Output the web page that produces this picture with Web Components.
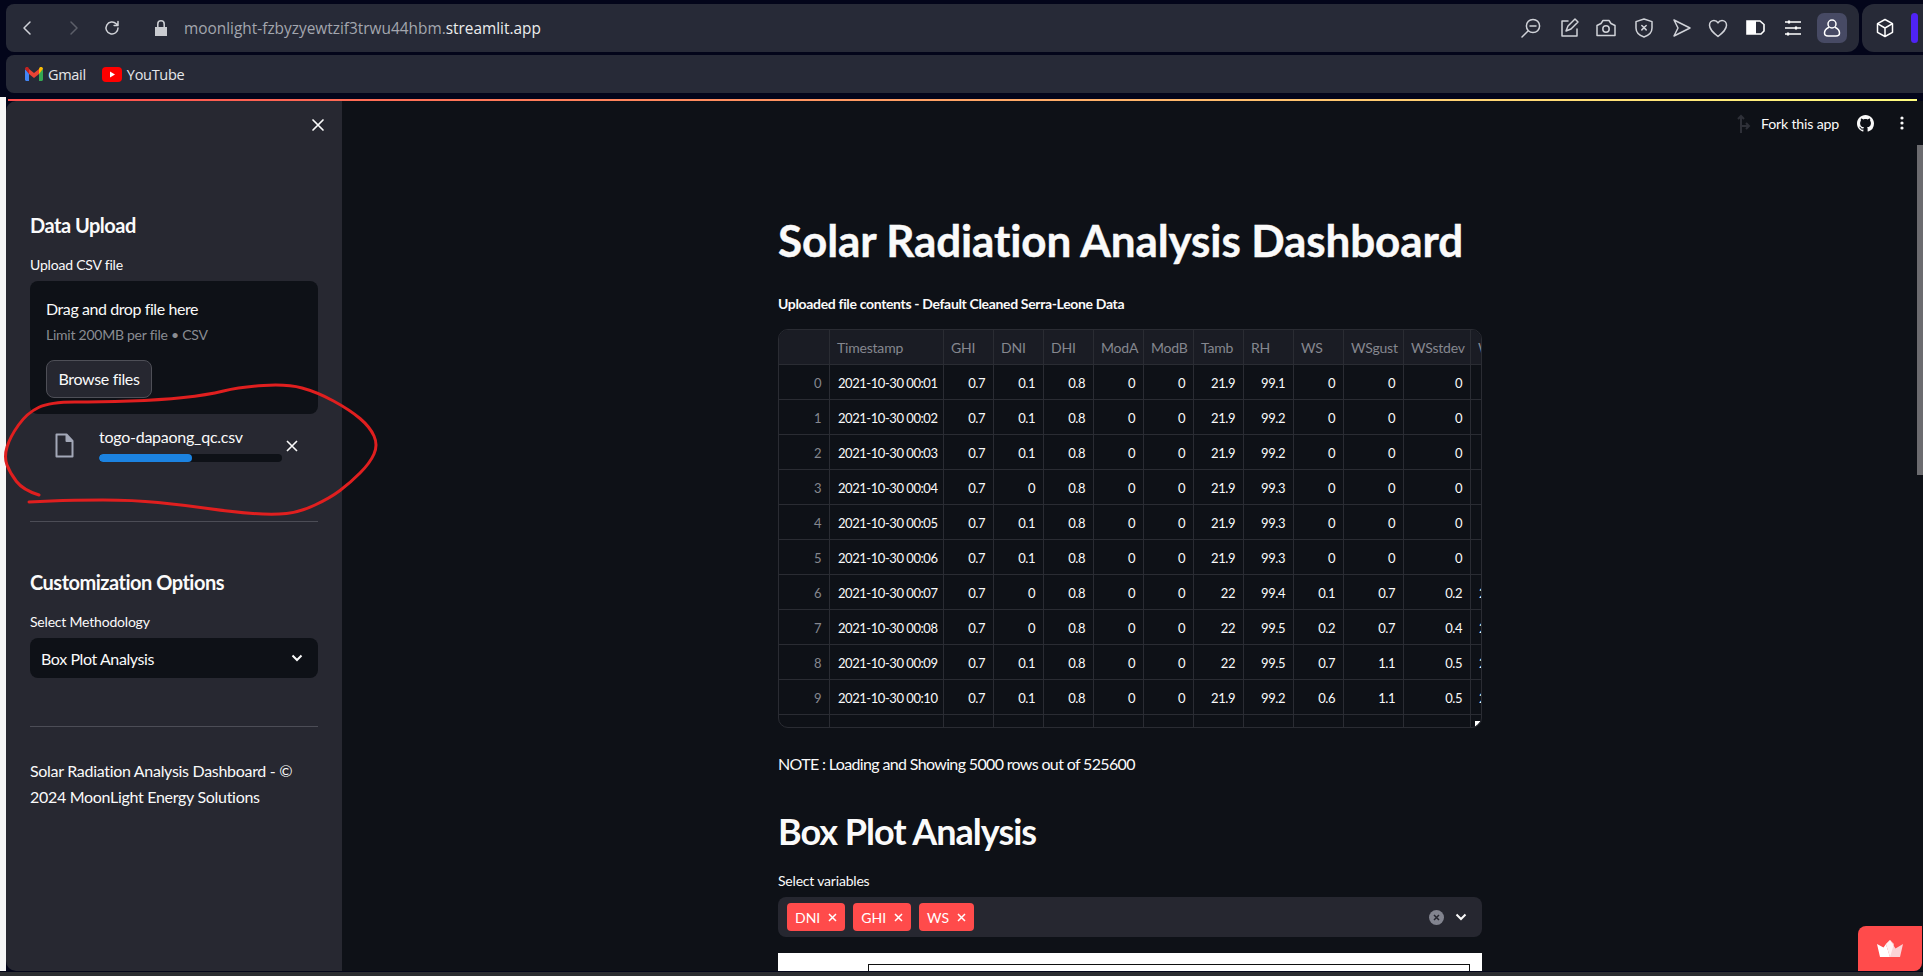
<!DOCTYPE html>
<html>
<head>
<meta charset="utf-8">
<title>Solar Radiation Analysis Dashboard</title>
<style>
  html, body { margin: 0; height: 976px; overflow: hidden; background: #03051a; }
  body { font-family: "Lato", "Noto Sans", sans-serif; color: #fafafa; }
</style>
</head>
<body>
<browser-frame>
  <browser-toolbar></browser-toolbar>
  <bookmark-bar></bookmark-bar>
  <app-shell>
    <app-sidebar slot="side">
      <section-title>Data Upload</section-title>
      <file-uploader></file-uploader>
      <side-rule style="margin-top:59px"></side-rule>
      <section-title style="margin-top:46px">Customization Options</section-title>
      <select-box></select-box>
      <side-rule style="margin-top:48px"></side-rule>
      <side-note>Solar Radiation Analysis Dashboard - ©<br>2024 MoonLight Energy Solutions</side-note>
    </app-sidebar>
    <app-main slot="main">
      <data-table></data-table>
      <multi-select>
        <tag-chip>DNI</tag-chip>
        <tag-chip>GHI</tag-chip>
        <tag-chip>WS</tag-chip>
      </multi-select>
    </app-main>
  </app-shell>
</browser-frame>

<script>
// small helper, every element is just a shadow root with fixed markup
function define(name, html) {
    customElements.define(name, class extends HTMLElement {
        constructor() {
            super();
            this.attachShadow({ mode: "open" }).innerHTML = html;
        }
    });
}

const line = 'fill="none" stroke="currentColor" stroke-width="1.5" stroke-linecap="round" stroke-linejoin="round"';

define("browser-frame", `
<style>
  :host { display: flex; flex-direction: column; height: 976px; padding-top: 4px; box-sizing: border-box; }
  .end { height: 4px; margin-top: 1px; background: #2b2d31; }
</style>
<slot></slot>
<div class="end"></div>`);

define("browser-toolbar", `
<style>
  :host { display: flex; gap: 3px; height: 48px; margin-left: 6px; font: 15.4px "Open Sans", sans-serif; }
  .bar, .ext { background: #272a37; display: flex; align-items: center; position: relative; }
  .bar { flex: 1; border-radius: 8px 12px 12px 8px; }
  .ext { width: 61px; border-radius: 12px 0 0 12px; }
  svg { display: block; color: #d0d2d8; flex: none; }
  .nav { margin-left: 14px; }
  .url { margin-left: 16px; color: #a3a6ae; white-space: nowrap; }
  .url b { font-weight: 400; color: #eceded; }
  .right { margin-left: auto; display: flex; align-items: center; gap: 13.4px; margin-right: 12px; }
  .me { width: 30px; height: 30px; margin-left: -1.5px; border-radius: 7px; background: #474a64; display: grid; place-items: center; }
  .pill { width: 7px; height: 30px; border-radius: 4px; background: #4f23f5; margin-left: 15px; }
  .cube { margin-left: 12px; }
</style>
<div class="bar">
  <svg class="nav" width="14" height="18" viewBox="0 0 14 18" ${line}><path d="M10 3 4 9l6 6"/></svg>
  <svg style="margin-left:33px;color:#5c5f69" width="14" height="18" viewBox="0 0 14 18" ${line}><path d="M4 3l6 6-6 6"/></svg>
  <svg style="margin-left:22px" width="18" height="18" viewBox="0 0 18 18" ${line}><path d="M15 9a6 6 0 1 1-1.8-4.3L15 6.4M15 2.5v3.9h-3.9"/></svg>
  <svg style="margin-left:33px;color:#c9cbd0" width="14" height="18" viewBox="0 0 14 18"><path fill="currentColor" d="M1 8h12v9H1z"/><path fill="none" stroke="currentColor" stroke-width="1.6" d="M3.8 8V5a3.2 3.2 0 0 1 6.4 0v3"/></svg>
  <span class="url">moonlight-fzbyzyewtzif3trwu44hbm.<b>streamlit.app</b></span>
  <div class="right">
    <svg width="24" height="24" viewBox="0 0 24 24" ${line}><circle cx="14" cy="10" r="6.6"/><path d="M11 10h6M9 15l-6 6"/></svg>
    <svg width="24" height="24" viewBox="0 0 24 24" ${line}><path d="M11 5H5v15h15v-7M9 15l2-5 7-7 3 3-7 7z"/></svg>
    <svg width="24" height="24" viewBox="0 0 24 24" ${line}><path d="M3 9.5 7 7.5l2-3h6l2 3 4 2v10H3z"/><circle cx="12" cy="13" r="3.2"/></svg>
    <svg width="24" height="24" viewBox="0 0 24 24" ${line}><path d="M12 3l8 2.6v6.4c0 4.5-3.5 7.5-8 9-4.5-1.5-8-4.5-8-9V5.600z"/><path d="M9.800 9.500l4.400 4.400M14.200 9.500l-4.400 4.400"/></svg>
    <svg width="24" height="24" viewBox="0 0 24 24" ${line}><path d="M5 4l16 8-16 8 4-8z"/></svg>
    <svg width="24" height="24" viewBox="0 0 24 24" ${line}><path d="M12 20.500C7 16.500 3.500 13.500 3.500 9.300 3.500 6.500 5.600 4.500 8 4.500c1.800 0 3.200 1 4 2.400.8-1.400 2.200-2.400 4-2.400 2.400 0 4.500 2 4.500 4.800 0 4.200-3.500 7.200-8.500 11.200z"/></svg>
    <svg width="24" height="24" viewBox="0 0 24 24"><path fill="#fff" d="M3 5h9v13H3z"/><path fill="none" stroke="#fff" stroke-width="1.600" d="M3 5h13l4 3.500V15l-3 3H3z"/></svg>
    <svg width="24" height="24" viewBox="0 0 24 24" fill="none" stroke="#fff" stroke-width="1.400"><path d="M4 6h16M4 12h16M4 18h16"/><path stroke-width="2.200" d="M8 4.500v3M15 10.500v3M7 16.500v3"/></svg>
    <span class="me"><svg width="22" height="22" viewBox="0 0 22 22" style="color:#fff" ${line}><circle cx="11" cy="7" r="4"/><path d="M7.500 10.500C4.500 12 3.500 14 3.500 16c0 2 1.500 3 3.500 3h8c2 0 3.500-1 3.500-3 0-2-1-4-4-5.500"/></svg></span>
  </div>
</div>
<div class="ext">
  <svg class="cube" style="color:#fff" width="22" height="22" viewBox="0 0 22 22" ${line}><path d="M11 2.500l7.500 4.200v8.600L11 19.500l-7.500-4.200V6.700zM3.500 6.700 11 11l7.500-4.300M11 11v8.500"/></svg>
  <span class="pill"></span>
</div>`);

define("bookmark-bar", `
<style>
  :host { display: flex; align-items: center; height: 38px; margin: 3px 0 6px 6px; padding-left: 19px; background: #272a37; border-radius: 8px 0 0 8px; font: 14.5px "Open Sans", sans-serif; color: #e6e7ea; letter-spacing: -.3px; }
  svg { display: block; flex: none; }
  span { margin-left: 5px; }
</style>
<svg width="18" height="14" viewBox="0 0 18 14"><path fill="#4285f4" d="M0 2v10.500C0 13.300.7 14 1.500 14H4V6z"/><path fill="#34a853" d="M18 2v10.500c0 .8-.7 1.500-1.500 1.500H14V6z"/><path fill="#ea4335" d="M4 7V2L9 6l5-4v5L9 11z"/><path fill="#c5221f" d="M0 2c0-2 2.200-2.500 3.300-1.500L4 1.200V7z"/><path fill="#fbbc04" d="M18 2c0-2-2.200-2.500-3.300-1.500L14 1.200V7z"/></svg>
<span>Gmail</span>
<svg style="margin-left:16px" width="20" height="15" viewBox="0 0 20 15"><rect width="20" height="15" rx="4" fill="#f00"/><path fill="#fff" d="M8 4.500v6l5-3z"/></svg>
<span>YouTube</span>`);

define("app-shell", `
<style>
  :host { display: flex; flex-direction: column; flex: 1; min-height: 0; position: relative; }
  .deco { height: 2px; margin: 0 6px 0 8px; background: linear-gradient(90deg, #ff4b4b, #fffd80); flex: none; }
  .row { display: flex; flex: 1; min-height: 0; }
  .strip { width: 6px; background: #f6f6f6; flex: none; margin-top: -4px; }
  #ink { position: absolute; left: 0; top: -99px; pointer-events: none; }
  .tab { position: absolute; right: 1px; bottom: 0; width: 64px; height: 45px; background: #ff4b4b; border-radius: 8px 0 8px 0; display: grid; place-items: center; }
  .tab svg { display: block; }
</style>
<div class="deco"></div>
<div class="row">
  <div class="strip"></div>
  <slot name="side"></slot>
  <slot name="main"></slot>
</div>
<svg id="ink" width="400" height="600" fill="none" stroke="#e01f1f" stroke-width="3" stroke-linecap="round"><path id="mark"/></svg>
<div class="tab"><svg width="26" height="17" viewBox="0 0 26 17"><path fill="#fff" d="M0 4l6.500 3.500L9 4l4 13H3z"/><path fill="#fbd3d6" d="M13 0l5.500 8.500L26 4l-3 13H13l-4-13z"/><path fill="#fff" opacity=".7" d="M13 0l-4 4 4 13 4-13z"/></svg></div>`);

define("app-sidebar", `
<style>
  :host { display: block; width: 336px; flex: none; box-sizing: border-box; padding: 0 24px; background: #272831; border-radius: 10px 0 0 10px; }
  .top { height: 48px; display: flex; align-items: center; justify-content: flex-end; margin: 0 -7px 62px 0; }
  svg { display: block; }
</style>
<div class="top"><svg width="14" height="14" viewBox="0 0 14 14" stroke="#fafafa" stroke-width="1.7" stroke-linecap="round"><path d="M2 2l10 10M12 2 2 12"/></svg></div>
<slot></slot>`);

define("section-title", `
<style>
  :host { display: block; font-size: 20px; font-weight: 700; line-height: 28px; letter-spacing: -.5px; white-space: nowrap; }
</style>
<slot></slot>`);

define("side-rule", `
<style>:host { display: block; height: 1px; background: #4c4d56; }</style>`);

define("side-note", `
<style>:host { display: block; margin-top: 31px; font-size: 16px; line-height: 26px; letter-spacing: -.3px; white-space: nowrap; }</style>
<slot></slot>`);

define("file-uploader", `
<style>
  :host { display: block; }
  .label { font-size: 14px; line-height: 20px; margin-top: 16px; letter-spacing: -.2px; }
  .drop { margin-top: 6px; height: 133px; box-sizing: border-box; padding: 16px 16px 16px; background: #0e1117; border-radius: 8px; }
  .drag { font-size: 16px; line-height: 24px; letter-spacing: -.42px; }
  .limit { font-size: 14px; line-height: 20px; margin-top: 4px; color: #898c92; letter-spacing: -.25px; }
  .btn { margin-top: 15px; width: 106px; height: 38px; box-sizing: border-box; padding-bottom: 2px; display: grid; place-items: center; background: #262730; border: 1px solid #4e4f57; border-radius: 8px; font-size: 16px; letter-spacing: -.35px; }
  .file { display: flex; height: 48px; box-sizing: border-box; padding: 13px 0 0 25px; }
  .file > svg { margin-top: 6px; flex: none; }
  .info { width: 183px; margin-left: 25px; }
  .name { font-size: 16px; line-height: 20px; letter-spacing: -.25px; }
  .track { margin-top: 7px; height: 8px; border-radius: 4px; background: #0e1117; overflow: hidden; }
  .fill { width: 93px; height: 100%; background: #1c83e1; border-radius: 4px; }
  .file > .x { margin: 12px 0 0 3px; flex: none; }
</style>
<div class="label">Upload CSV file</div>
<div class="drop">
  <div class="drag">Drag and drop file here</div>
  <div class="limit">Limit 200MB per file • CSV</div>
  <div class="btn">Browse files</div>
</div>
<div class="file">
  <svg width="19" height="25" viewBox="0 0 19 25" fill="none" stroke="#a3a8b8" stroke-width="2" stroke-linejoin="round"><path d="M1.500 1.500h10l6 6.500v15.500h-16z"/><path d="M11.500 1.500V8h6" fill="#a3a8b8"/></svg>
  <div class="info">
    <div class="name">togo-dapaong_qc.csv</div>
    <div class="track"><div class="fill"></div></div>
  </div>
  <svg class="x" width="14" height="14" viewBox="0 0 14 14" stroke="#fafafa" stroke-width="1.6"><path d="M2 2l10 10M12 2 2 12"/></svg>
</div>`);

define("select-box", `
<style>
  :host { display: block; }
  .label { font-size: 14px; line-height: 20px; margin-top: 16px; letter-spacing: -.2px; }
  .box { margin-top: 6px; height: 40px; padding: 0 15px 0 11px; display: flex; align-items: center; justify-content: space-between; background: #0e1117; border-radius: 8px; font-size: 16px; letter-spacing: -.4px; }
  svg { display: block; }
</style>
<div class="label">Select Methodology</div>
<div class="box">
  <span>Box Plot Analysis</span>
  <svg width="12" height="8" viewBox="0 0 12 8" fill="none" stroke="#fafafa" stroke-width="2"><path d="M1.500 1.500 6 6l4.500-4.500"/></svg>
</div>`);

define("app-main", `
<style>
  :host { display: flex; flex-direction: column; flex: 1; min-width: 0; overflow: hidden; background: #0e1117; position: relative; }
  .head { height: 44px; flex: none; display: flex; align-items: center; justify-content: flex-end; font-size: 14.2px; letter-spacing: -.2px; }
  .head svg { display: block; flex: none; }
  .fork { margin: 0 0 0 9px; }
  .body { width: 704px; margin-left: 436px; padding: 69px 0 0; }
  h1 { margin: 0; font-size: 44px; line-height: 53px; font-weight: 700; letter-spacing: -.11px; -webkit-text-stroke: .4px #fafafa; white-space: nowrap; }
  .sub { margin: 27px 0 15px; font-size: 14px; line-height: 20px; font-weight: 700; letter-spacing: -.34px; white-space: nowrap; }
  .bar { position: absolute; right: 0; top: 44px; width: 6px; height: 330px; background: #6b6b6f; }
</style>
<div class="head">
  <svg width="16" height="20" viewBox="0 0 16 20" fill="none" stroke="#2e3038" stroke-width="2"><path d="M5 20V3M2 6l3-3 3 3M5 13h8M10 10l3 3-3 3"/></svg>
  <span class="fork">Fork this app</span>
  <svg style="margin-left:18px" width="17" height="17" viewBox="0 0 16 16"><path fill="#fafafa" d="M8 0C3.580 0 0 3.580 0 8c0 3.540 2.290 6.530 5.470 7.590.4.070.55-.17.55-.38 0-.19-.01-.82-.01-1.490-2.010.37-2.530-.49-2.690-.94-.09-.23-.48-.94-.82-1.130-.28-.15-.68-.52-.01-.53.63-.01 1.080.58 1.230.82.720 1.210 1.870.87 2.330.66.070-.52.280-.87.510-1.070-1.780-.2-3.640-.89-3.640-3.950 0-.87.310-1.590.820-2.150-.08-.2-.36-1.020.08-2.120 0 0 .670-.21 2.200.820.640-.18 1.320-.27 2-.27s1.360.09 2 .27c1.530-1.040 2.200-.82 2.200-.82.440 1.100.160 1.920.080 2.120.510.560.820 1.270.820 2.150 0 3.070-1.870 3.750-3.650 3.950.290.250.540.730.540 1.480 0 1.070-.010 1.930-.010 2.200 0 .210.150.460.550.380A8.010 8.010 0 0 0 16 8c0-4.420-3.580-8-8-8z"/></svg>
  <svg style="margin:0 19px 0 26px" width="4" height="14" viewBox="0 0 4 14" fill="#fafafa"><circle cx="2" cy="2" r="1.600"/><circle cx="2" cy="7" r="1.600"/><circle cx="2" cy="12" r="1.600"/></svg>
</div>
<div class="bar"></div>
<div class="body">
  <h1>Solar Radiation Analysis Dashboard</h1>
  <p class="sub">Uploaded file contents - Default Cleaned Serra-Leone Data</p>
  <slot></slot>
</div>`);

define("tag-chip", `
<style>
  :host { display: flex; align-items: center; height: 28px; padding: 0 8px; gap: 8px; background: #ff4b4b; border-radius: 4px; font-size: 14px; color: #fff; }
  svg { display: block; }
</style>
<slot></slot>
<svg width="9" height="9" viewBox="0 0 9 9" stroke="#fff" stroke-width="1.5"><path d="M1 1l7 7M8 1 1 8"/></svg>`);

define("multi-select", `
<style>
  :host { display: block; }
  .note { margin: 24px 0 0; font-size: 16px; line-height: 24px; letter-spacing: -.65px; }
  h2 { margin: 33px 0 0; font-size: 36px; line-height: 44px; font-weight: 700; letter-spacing: -1px; }
  .label { margin: 18px 0 6px; font-size: 14px; line-height: 20px; letter-spacing: -.2px; }
  .box { height: 40px; display: flex; align-items: center; gap: 8px; padding: 0 15px 0 9px; background: #262730; border-radius: 8px; }
  .clear { margin-left: auto; }
  svg { display: block; }
  .plot { margin-top: 16px; height: 60px; background: #fff; padding: 11px 12px 0 90px; }
  .plot div { height: 60px; border: 1.5px solid #111; box-sizing: border-box; }
</style>
<p class="note">NOTE : Loading and Showing 5000 rows out of 525600</p>
<h2>Box Plot Analysis</h2>
<div class="label">Select variables</div>
<div class="box">
  <slot></slot>
  <svg class="clear" width="15" height="15" viewBox="0 0 15 15"><circle cx="7.500" cy="7.500" r="7.500" fill="#82848f"/><path d="M5 5l5 5M10 5l-5 5" stroke="#262730" stroke-width="1.5"/></svg>
  <svg style="margin-left:3px" width="12" height="8" viewBox="0 0 12 8" fill="none" stroke="#fafafa" stroke-width="2"><path d="M1.500 1.500 6 6l4.500-4.500"/></svg>
</div>
<div class="plot"><div></div></div>`);

const rows = [
    ["00:01", "0.7", "0.1", "0.8", "0", "0", "21.9", "99.1", "0", "0", "0", "0"],
    ["00:02", "0.7", "0.1", "0.8", "0", "0", "21.9", "99.2", "0", "0", "0", "0"],
    ["00:03", "0.7", "0.1", "0.8", "0", "0", "21.9", "99.2", "0", "0", "0", "0"],
    ["00:04", "0.7", "0", "0.8", "0", "0", "21.9", "99.3", "0", "0", "0", "0"],
    ["00:05", "0.7", "0.1", "0.8", "0", "0", "21.9", "99.3", "0", "0", "0", "0"],
    ["00:06", "0.7", "0.1", "0.8", "0", "0", "21.9", "99.3", "0", "0", "0", "0"],
    ["00:07", "0.7", "0", "0.8", "0", "0", "22", "99.4", "0.1", "0.7", "0.2", "21.4"],
    ["00:08", "0.7", "0", "0.8", "0", "0", "22", "99.5", "0.2", "0.7", "0.4", "24.8"],
    ["00:09", "0.7", "0.1", "0.8", "0", "0", "22", "99.5", "0.7", "1.1", "0.5", "22.7"],
    ["00:10", "0.7", "0.1", "0.8", "0", "0", "21.9", "99.2", "0.6", "1.1", "0.5", "23.1"]
];
const heads = ["", "Timestamp", "GHI", "DNI", "DHI", "ModA", "ModB", "Tamb", "RH", "WS", "WSgust", "WSstdev", "WD"];

customElements.define("data-table", class extends HTMLElement {
    constructor() {
        super();
        this.attachShadow({ mode: "open" });
    }

    connectedCallback() {
        let html = heads.map(h => `<div class="c h">${h}</div>`).join("");
        rows.forEach((r, i) => {
            html += `<div class="c i">${i}</div><div class="c t">2021-10-30 ${r[0]}</div>`;
            html += r.slice(1).map(v => `<div class="c">${v}</div>`).join("");
        });
        html += heads.map(() => `<div class="c"></div>`).join("");

        this.shadowRoot.innerHTML = `
<style>
  :host { display: block; position: relative; height: 399px; box-sizing: border-box; border: 1px solid #2a2c33; border-radius: 10px; overflow: hidden; }
  .grid { display: grid; grid-template-columns: 51px 114px repeat(8, 50px) 60px 67px 40px; grid-auto-rows: 35px; width: 702px; overflow: hidden; }
  .c { box-sizing: border-box; height: 35px; border-right: 1px solid #2a2c33; border-bottom: 1px solid #2a2c33; padding: 3px 8px 0; font-size: 13px; line-height: 31px; text-align: right; white-space: nowrap; letter-spacing: -.45px; overflow: hidden; }
  .h { background: #1a1c24; color: #85878f; text-align: left; font-size: 14px; letter-spacing: -.2px; padding-top: 2px; padding-left: 7px; }
  .i { color: #85878f; }
  .t { text-align: left; padding-right: 0; }
  .corner { position: absolute; right: 0; bottom: 0; width: 6px; height: 6px; background: #fff; clip-path: polygon(0 0, 100% 0, 0 100%); }
</style>
<div class="grid">${html}</div>
<div class="corner"></div>`;
    }
});

// hand drawn red ring around the upload row, points are page coordinates
const ring = [[39,495],[23,490],[10,473],[4,457],[10,437],[27,413],[50,402],[100,402],[160,400],[207,395],[240,387],[287,384],[317,392],[350,410],[370,427],[378,445],[370,463],[350,483],[330,498],[300,512],[273,515],[233,512],[183,505],[133,500],[73,500],[29,502]];
let d = `M${ring[0]}`;
for (let i = 1; i < ring.length - 1; i++) {
    const mx = (ring[i][0] + ring[i + 1][0]) / 2;
    const my = (ring[i][1] + ring[i + 1][1]) / 2;
    d += `Q${ring[i]} ${mx},${my}`;
}
d += `L${ring[ring.length - 1]}`;
document.querySelector("app-shell").shadowRoot.getElementById("mark").setAttribute("d", d);
</script>
</body>
</html>
